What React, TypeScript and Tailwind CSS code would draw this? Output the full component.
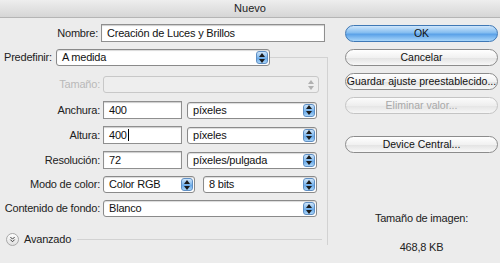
import { ChevronsDown } from "lucide-react"

const font = "font-['Liberation_Sans',Arial,sans-serif]"

function Arrows({ disabled }: { disabled?: boolean }) {
  return (
    <div
      className={
        disabled
          ? "flex h-full w-[12px] flex-col items-center justify-center gap-[2px]"
          : "flex h-full w-[12px] flex-col items-center justify-center gap-[2px] rounded-[3px] border border-[#5f8fc4] bg-[linear-gradient(#cfe6fb,#7db6ec_50%,#5ea2e6_51%,#a9d4f8)]"
      }
    >
      <svg width="6" height="4" viewBox="0 0 6 4">
        <path d="M0 4 L3 0 L6 4 Z" fill={disabled ? "#b0b0b0" : "#1a1a1a"} />
      </svg>
      <svg width="6" height="4" viewBox="0 0 6 4">
        <path d="M0 0 L3 4 L6 0 Z" fill={disabled ? "#b0b0b0" : "#1a1a1a"} />
      </svg>
    </div>
  )
}

function Select({ value, w, disabled }: { value: string; w: string; disabled?: boolean }) {
  return (
    <div
      className={`${w} flex h-[17px] items-center justify-between rounded-[3px] border pl-[5px] pr-[1px] py-[1px] ${
        disabled ? "border-[#c8c8c8] bg-[#eeeeee]" : "border-[#8a8a8a] bg-white shadow-[inset_0_1px_1px_rgba(0,0,0,0.15)]"
      }`}
    >
      <span className="text-[11px] leading-none tracking-[-0.2px] text-[#111]">{value}</span>
      <Arrows disabled={disabled} />
    </div>
  )
}

function Input({ value, w, caret }: { value: string; w: string; caret?: boolean }) {
  return (
    <div
      className={`${w} flex h-[18px] items-center border border-[#8f8f8f] bg-white pl-[5px] shadow-[inset_0_1px_1px_rgba(0,0,0,0.2)]`}
    >
      <span className="whitespace-nowrap text-[11px] leading-none tracking-[-0.2px] text-[#111]">{value}</span>
      {caret && <span className="ml-[1px] h-[12px] w-[1px] bg-black" />}
    </div>
  )
}

function Row({ label, children, disabled }: { label: string; children: React.ReactNode; disabled?: boolean }) {
  return (
    <div className="flex items-center">
      <div
        className={`flex w-[101px] shrink-0 justify-end whitespace-nowrap pr-[3px] text-[11px] tracking-[-0.2px] ${
          disabled ? "text-[#b9b9b9]" : "text-[#222]"
        }`}
      >
        {label}
      </div>
      {children}
    </div>
  )
}

function Button({ label, primary, disabled }: { label: string; primary?: boolean; disabled?: boolean }) {
  return (
    <div
      className={`flex h-[17px] w-[153px] items-center justify-center whitespace-nowrap rounded-full border text-[10.5px] ${
        primary
          ? "border-[#3f78b5] bg-[linear-gradient(#cfe6fb,#84bdf0_45%,#5aa1e8_55%,#a8d6fa)] text-[#111]"
          : disabled
            ? "border-[#c4c4c4] bg-[linear-gradient(#fbfbfb,#eeeeee_50%,#e4e4e4_51%,#f6f6f6)] text-[#a8a8a8]"
            : "border-[#8c8c8c] bg-[linear-gradient(#ffffff,#f1f1f1_50%,#e2e2e2_51%,#f8f8f8)] text-[#111]"
      }`}
    >
      {label}
    </div>
  )
}

export default function App() {
  return (
    <div className={`${font} h-[263px] w-[500px] overflow-hidden bg-[#ececec]`}>
      <div className="flex h-[18px] items-center justify-center border-b border-[#b5b5b5] bg-[linear-gradient(#eeeeee,#d6d6d6)] text-[11px] text-[#222]">
        Nuevo
      </div>
      <div className="flex">
        <div className="w-[335px] shrink-0">
          <div className="mt-[6px]">
            <Row label="Nombre:">
              <Input value="Creación de Luces y Brillos" w="w-[224px]" />
            </Row>
          </div>
          <div className="relative z-10 mt-[7px] flex w-[270px] items-center bg-[#ececec]">
            <span className="pl-[4px] pr-[4px] text-[11px] tracking-[-0.2px] text-[#222]">Predefinir:</span>
            <Select value="A medida" w="w-[214px]" />
          </div>
          <div className="-mt-[9px] ml-[2px] h-[188px] w-[326px] border-t border-r border-[#d2d2d2] pt-[18px]">
            <div className="flex flex-col gap-[7px]">
              <Row label="Tamaño:" disabled>
                <Select value="" w="w-[216px]" disabled />
              </Row>
              <div className="mt-[1px] flex flex-col gap-[7px]">
                <Row label="Anchura:">
                  <Input value="400" w="w-[79px]" />
                  <div className="ml-[5px]">
                    <Select value="píxeles" w="w-[130px]" />
                  </div>
                </Row>
                <Row label="Altura:">
                  <Input value="400" w="w-[79px]" caret />
                  <div className="ml-[5px]">
                    <Select value="píxeles" w="w-[130px]" />
                  </div>
                </Row>
                <Row label="Resolución:">
                  <Input value="72" w="w-[79px]" />
                  <div className="ml-[5px]">
                    <Select value="píxeles/pulgada" w="w-[130px]" />
                  </div>
                </Row>
                <Row label="Modo de color:">
                  <Select value="Color RGB" w="w-[92px]" />
                  <div className="ml-[8px]">
                    <Select value="8 bits" w="w-[114px]" />
                  </div>
                </Row>
                <Row label="Contenido de fondo:">
                  <Select value="Blanco" w="w-[214px]" />
                </Row>
              </div>
              <div className="mt-[7px] flex items-center pl-[4px]">
                <div className="flex h-[13px] w-[13px] items-center justify-center rounded-full border border-[#a8a8a8] bg-[linear-gradient(#ffffff,#e0e0e0)]">
                  <ChevronsDown size={9} strokeWidth={2.5} className="text-[#333]" />
                </div>
                <span className="ml-[5px] text-[11px] tracking-[-0.2px] text-[#222]">Avanzado</span>
                <div className="ml-[6px] h-px w-[245px] bg-[#d2d2d2]" />
              </div>
            </div>
          </div>
        </div>
        <div className="ml-[10px] flex flex-col pt-[7px]">
          <div className="flex flex-col gap-[7px]">
            <Button label="OK" primary />
            <Button label="Cancelar" />
            <Button label="Guardar ajuste preestablecido..." />
            <Button label="Eliminar valor..." disabled />
          </div>
          <div className="mt-[22px]">
            <Button label="Device Central..." />
          </div>
          <div className="mt-[57px] flex flex-col items-center gap-[12px] text-[11px] tracking-[-0.2px] text-[#222]">
            <span>Tamaño de imagen:</span>
            <span>468,8 KB</span>
          </div>
        </div>
      </div>
    </div>
  )
}
